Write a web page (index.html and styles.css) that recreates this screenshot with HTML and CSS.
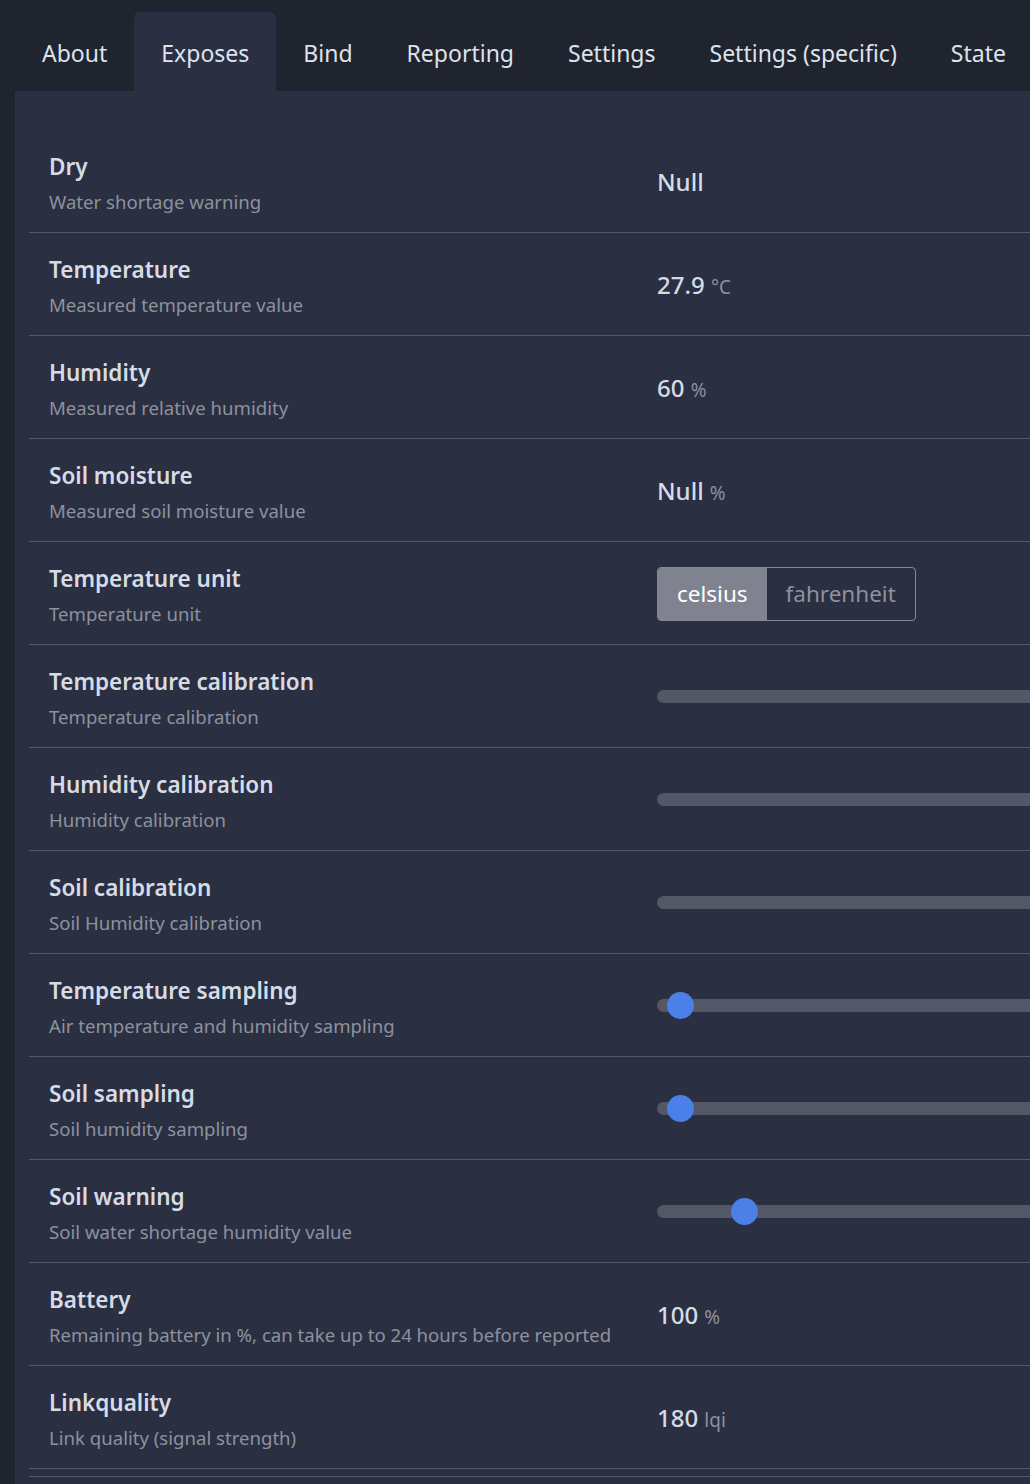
FILE: index.html
```html
<!DOCTYPE html>
<html lang="en">
<head>
    <meta charset="UTF-8">
    <meta name="viewport" content="width=device-width, initial-scale=1.0">
    <title>Device</title>
    <link rel="stylesheet" href="styles.css">
</head>
<body>
    <div class="page">
        <nav class="tabs">
            <a class="tab" href="#">About</a>
            <a class="tab active" href="#">Exposes</a>
            <a class="tab" href="#">Bind</a>
            <a class="tab" href="#">Reporting</a>
            <a class="tab" href="#">Settings</a>
            <a class="tab" href="#">Settings (specific)</a>
            <a class="tab" href="#">State</a>
        </nav>
        <main class="panel">
            <div class="row">
                <div class="label">
                    <div class="name">Dry</div>
                    <div class="desc">Water shortage warning</div>
                </div>
                <div class="value"><span class="num">Null</span></div>
            </div>
            <div class="row">
                <div class="label">
                    <div class="name">Temperature</div>
                    <div class="desc">Measured temperature value</div>
                </div>
                <div class="value"><span class="num">27.9</span> <span class="unit">°C</span></div>
            </div>
            <div class="row">
                <div class="label">
                    <div class="name">Humidity</div>
                    <div class="desc">Measured relative humidity</div>
                </div>
                <div class="value"><span class="num">60</span> <span class="unit">%</span></div>
            </div>
            <div class="row">
                <div class="label">
                    <div class="name">Soil moisture</div>
                    <div class="desc">Measured soil moisture value</div>
                </div>
                <div class="value"><span class="num">Null</span> <span class="unit">%</span></div>
            </div>
            <div class="row">
                <div class="label">
                    <div class="name">Temperature unit</div>
                    <div class="desc">Temperature unit</div>
                </div>
                <div class="value">
                    <div class="toggle">
                        <button class="opt on">celsius</button>
                        <button class="opt">fahrenheit</button>
                    </div>
                </div>
            </div>
            <div class="row">
                <div class="label">
                    <div class="name">Temperature calibration</div>
                    <div class="desc">Temperature calibration</div>
                </div>
                <div class="value"><div class="track"></div></div>
            </div>
            <div class="row">
                <div class="label">
                    <div class="name">Humidity calibration</div>
                    <div class="desc">Humidity calibration</div>
                </div>
                <div class="value"><div class="track"></div></div>
            </div>
            <div class="row">
                <div class="label">
                    <div class="name">Soil calibration</div>
                    <div class="desc">Soil Humidity calibration</div>
                </div>
                <div class="value"><div class="track"></div></div>
            </div>
            <div class="row">
                <div class="label">
                    <div class="name">Temperature sampling</div>
                    <div class="desc">Air temperature and humidity sampling</div>
                </div>
                <div class="value"><div class="track"><span class="thumb" style="left: 10px"></span></div></div>
            </div>
            <div class="row">
                <div class="label">
                    <div class="name">Soil sampling</div>
                    <div class="desc">Soil humidity sampling</div>
                </div>
                <div class="value"><div class="track"><span class="thumb" style="left: 10px"></span></div></div>
            </div>
            <div class="row">
                <div class="label">
                    <div class="name">Soil warning</div>
                    <div class="desc">Soil water shortage humidity value</div>
                </div>
                <div class="value"><div class="track"><span class="thumb" style="left: 74px"></span></div></div>
            </div>
            <div class="row">
                <div class="label">
                    <div class="name">Battery</div>
                    <div class="desc">Remaining battery in %, can take up to 24 hours before reported</div>
                </div>
                <div class="value"><span class="num">100</span> <span class="unit">%</span></div>
            </div>
            <div class="row">
                <div class="label">
                    <div class="name">Linkquality</div>
                    <div class="desc">Link quality (signal strength)</div>
                </div>
                <div class="value"><span class="num">180</span> <span class="unit">lqi</span></div>
            </div>
            <div class="foot"></div>
        </main>
    </div>
</body>
</html>
```

FILE: styles.css
```css
body {
    margin: 0;
    background-color: #20242f;
    font-family: "Noto Sans", "Open Sans", sans-serif;
    color: #d6dce6;
    overflow: hidden;
}
.page {
    padding: 12px 0 0 15px;
}
.tabs {
    display: flex;
}
.tab {
    display: block;
    height: 79px;
    line-height: 82px;
    padding: 0 27px;
    font-size: 23px;
    color: #dde3ec;
    text-decoration: none;
    border-radius: 6px 6px 0 0;
    white-space: nowrap;
}
.tab.active {
    background-color: #2b2f42;
}
.panel {
    background-color: #2b2f42;
    padding: 39px 0 40px 14px;
}
.row {
    display: grid;
    grid-template-columns: 608px 1fr;
    align-items: center;
    padding: 21px 20px 16px;
    border-bottom: 1px solid #555968;
}
.name {
    font-size: 22.5px;
    line-height: 32px;
    font-weight: 600;
    color: #d6dce6;
}
.desc {
    margin-top: 5px;
    font-size: 18.6px;
    line-height: 28px;
    color: #8d929d;
}
.value {
    white-space: nowrap;
    margin-bottom: 4px;
}
.num {
    font-size: 24px;
    font-weight: 500;
    color: #d6dce6;
}
.unit {
    margin-left: 2px;
    font-size: 19px;
    color: #8d929d;
}
.toggle {
    display: inline-flex;
    border: 1px solid #858896;
    border-radius: 4px;
    overflow: hidden;
    height: 52px;
}
.opt {
    font-family: inherit;
    font-size: 22.5px;
    background: transparent;
    border: none;
    color: #8d929d;
    padding: 0 19px;
}
.opt.on {
    background-color: #80838f;
    color: #fff;
}
.track {
    position: relative;
    height: 13px;
    width: 420px;
    background-color: #545766;
    border-radius: 7px 0 0 7px;
}
.thumb {
    position: absolute;
    top: -7px;
    width: 27px;
    height: 27px;
    border-radius: 50%;
    background-color: #4a80e8;
}
.foot {
    margin-top: 7px;
    border-top: 1px solid #555968;
}
```
